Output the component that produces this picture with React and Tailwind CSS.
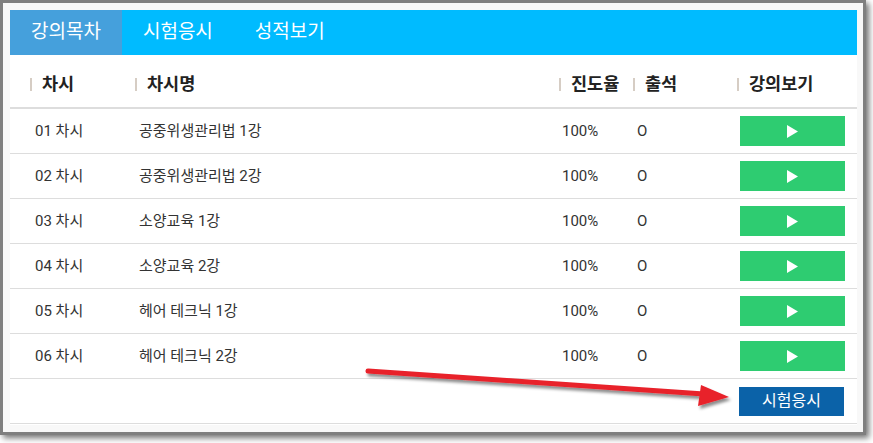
import React from 'react';

const lectures = [
  { no: '01 차시', title: '공중위생관리법 1강' },
  { no: '02 차시', title: '공중위생관리법 2강' },
  { no: '03 차시', title: '소양교육 1강' },
  { no: '04 차시', title: '소양교육 2강' },
  { no: '05 차시', title: '헤어 테크닉 1강' },
  { no: '06 차시', title: '헤어 테크닉 2강' },
];

const cols = 'grid grid-cols-[105px_424px_74px_104px_140px]';
const font = { fontFamily: "Roboto, 'Noto Sans CJK KR', sans-serif" };

// header label with the little bar in front
const HeadCell = ({ label }) => (
  <div className="flex items-center pl-5 whitespace-nowrap">
    <span className="w-[2px] h-[13px] bg-[#d6cdc4] mr-[10px] shrink-0"></span>
    <span className="text-[17.5px] font-bold text-[#222]">{label}</span>
  </div>
);

const PlayButton = () => (
  <button className="w-[105px] h-[30px] bg-[#2ecc71] flex items-center justify-center">
    <svg width="11" height="13" viewBox="0 0 11 13">
      <polygon points="0,0 11,6.5 0,13" fill="#fff" />
    </svg>
  </button>
);

const App = () => {
  return (
    <div className="relative w-[873px] h-[443px] bg-white overflow-hidden" style={font}>
      <div className="w-[866px] h-[435px] border-[3px] border-[#7f7f7f] bg-[#f8f8f8] pt-[7px] pl-[7px] pr-[6px] shadow-[3px_3px_6px_rgba(0,0,0,0.55)]">
        <div className="bg-white h-[415px]">
          {/* tabs */}
          <div className="flex h-[45px] bg-[#00bbff] text-white text-[19px]">
            <div className="px-[21px] flex items-center bg-[#45a0dc]">강의목차</div>
            <div className="px-[21px] flex items-center">시험응시</div>
            <div className="px-[21px] flex items-center">성적보기</div>
          </div>

          {/* table head */}
          <div className={`${cols} h-[54px] pt-[6px] border-b-2 border-[#dddddd]`}>
            <HeadCell label="차시" />
            <HeadCell label="차시명" />
            <HeadCell label="진도율" />
            <HeadCell label="출석" />
            <HeadCell label="강의보기" />
          </div>

          {/* rows */}
          {lectures.map(lec => (
            <div
              key={lec.no}
              className={`${cols} h-[45px] border-b border-[#dddddd] text-[15px] text-[#333]`}
            >
              <div className="flex items-center pl-[25px]">{lec.no}</div>
              <div className="flex items-center pl-[24px]">{lec.title}</div>
              <div className="flex items-center pl-[23px]">100%</div>
              <div className="flex items-center pl-[24px]">O</div>
              <div className="flex items-center pl-[23px]">
                <PlayButton />
              </div>
            </div>
          ))}

          <div className="flex justify-end items-center h-[45px] border-b border-[#dddddd] pr-[13px]">
            <button className="w-[105px] h-[29px] bg-[#0b62a8] text-white text-[16px]">
              시험응시
            </button>
          </div>
        </div>
      </div>

      {/* red arrow drawn on top */}
      <svg
        className="absolute left-0 top-0 pointer-events-none"
        width="873"
        height="443"
        viewBox="0 0 873 443"
      >
        <defs>
          <filter id="arrowShadow" x="-10%" y="-50%" width="120%" height="200%">
            <feDropShadow dx="2" dy="3" stdDeviation="1.5" floodColor="#000" floodOpacity="0.45" />
          </filter>
        </defs>
        <g filter="url(#arrowShadow)">
          <line x1="368" y1="371" x2="704" y2="394" stroke="#e8202a" strokeWidth="5" strokeLinecap="round" />
          <polygon points="729,397 701,385 698,406" fill="#e8202a" />
        </g>
      </svg>
    </div>
  );
};

export default App;
